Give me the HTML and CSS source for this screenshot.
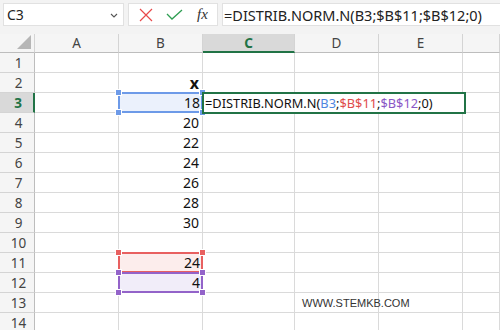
FILE: index.html
```html
<!DOCTYPE html>
<html lang="en">
<head>
    <meta charset="UTF-8">
    <title>DISTRIB.NORM.N</title>
    <link rel="stylesheet" href="styles.css">
</head>
<body>
    <div class="toolbar">
        <div class="namebox">
            <span>C3</span>
            <svg class="chev" width="8" height="5" viewBox="0 0 8 5"><path d="M1 1 L4 4 L7 1" fill="none" stroke="#555" stroke-width="1.1"/></svg>
        </div>
        <div class="fbuttons">
            <svg width="14" height="14" viewBox="0 0 14 14"><path d="M1 1 L13 13 M13 1 L1 13" stroke="#e8494b" stroke-width="1.2" fill="none"/></svg>
            <svg width="17" height="11" viewBox="0 0 17 11"><path d="M1 5 L6 10 L16 1" stroke="#2e9e52" stroke-width="1.3" fill="none"/></svg>
            <span class="fx">fx</span>
        </div>
        <div class="formula">=DISTRIB.NORM.N(B3;$B$11;$B$12;0)</div>
    </div>

    <div class="sheet">
        <div class="corner"><span class="tri"></span></div>
        <div class="colhead">A</div>
        <div class="colhead">B</div>
        <div class="colhead active">C</div>
        <div class="colhead">D</div>
        <div class="colhead">E</div>
        <div class="colhead"></div>

        <div class="rowhead">1</div><div class="cell"></div><div class="cell"></div><div class="cell"></div><div class="cell"></div><div class="cell"></div><div class="cell"></div>
        <div class="rowhead">2</div><div class="cell"></div><div class="cell num bold">x</div><div class="cell"></div><div class="cell"></div><div class="cell"></div><div class="cell"></div>
        <div class="rowhead active">3</div><div class="cell"></div>
        <div class="cell num ref blue">18<i class="h tl"></i><i class="h tr"></i><i class="h bl"></i><i class="h br"></i></div>
        <div class="cell edit-host">
            <div class="editor">=DISTRIB.NORM.N(<span class="c-blue">B3</span>;<span class="c-red">$B$11</span>;<span class="c-purple">$B$12</span>;0)</div>
        </div>
        <div class="cell"></div><div class="cell"></div><div class="cell"></div>
        <div class="rowhead">4</div><div class="cell"></div><div class="cell num">20</div><div class="cell"></div><div class="cell"></div><div class="cell"></div><div class="cell"></div>
        <div class="rowhead">5</div><div class="cell"></div><div class="cell num">22</div><div class="cell"></div><div class="cell"></div><div class="cell"></div><div class="cell"></div>
        <div class="rowhead">6</div><div class="cell"></div><div class="cell num">24</div><div class="cell"></div><div class="cell"></div><div class="cell"></div><div class="cell"></div>
        <div class="rowhead">7</div><div class="cell"></div><div class="cell num">26</div><div class="cell"></div><div class="cell"></div><div class="cell"></div><div class="cell"></div>
        <div class="rowhead">8</div><div class="cell"></div><div class="cell num">28</div><div class="cell"></div><div class="cell"></div><div class="cell"></div><div class="cell"></div>
        <div class="rowhead">9</div><div class="cell"></div><div class="cell num">30</div><div class="cell"></div><div class="cell"></div><div class="cell"></div><div class="cell"></div>
        <div class="rowhead">10</div><div class="cell"></div><div class="cell"></div><div class="cell"></div><div class="cell"></div><div class="cell"></div><div class="cell"></div>
        <div class="rowhead">11</div><div class="cell"></div>
        <div class="cell num ref red">24<i class="h tl"></i><i class="h tr"></i><i class="h bl"></i><i class="h br"></i></div>
        <div class="cell"></div><div class="cell"></div><div class="cell"></div><div class="cell"></div>
        <div class="rowhead">12</div><div class="cell"></div>
        <div class="cell num ref purple">4<i class="h tl"></i><i class="h tr"></i><i class="h bl"></i><i class="h br"></i></div>
        <div class="cell"></div><div class="cell"></div><div class="cell"></div><div class="cell"></div>
        <div class="rowhead">13</div><div class="cell"></div><div class="cell"></div><div class="cell"></div><div class="cell mark">WWW.STEMKB.COM</div><div class="cell"></div><div class="cell"></div>
        <div class="rowhead">14</div><div class="cell"></div><div class="cell"></div><div class="cell"></div><div class="cell"></div><div class="cell"></div><div class="cell"></div>
    </div>
</body>
</html>
```

FILE: styles.css
```css
body {
    margin: 0;
    font-family: "Noto Sans", "Open Sans", sans-serif;
    background-color: #ffffff;
    width: 500px;
    height: 330px;
    overflow: hidden;
}

/* formula bar */

.toolbar {
    display: flex;
    align-items: center;
    gap: 4px;
    height: 34px;
    padding: 0 0 0 3px;
    box-sizing: border-box;
    background-color: #f3f3f3;
}

.namebox,
.fbuttons,
.formula {
    height: 23px;
    box-sizing: border-box;
    background-color: #fff;
    border: 1px solid #e1e1e1;
    display: flex;
    align-items: center;
}

.namebox {
    width: 121px;
    padding: 0 5px 0 3px;
    justify-content: space-between;
    font-size: 14px;
    color: #222;
    margin-top: -5px;
}

.chev {
    margin-top: 1px;
}

.fbuttons {
    width: 90px;
    padding: 0 0 0 10px;
    gap: 13px;
    margin-top: -5px;
}

.fx {
    font-family: "Liberation Serif", serif;
    font-style: italic;
    font-size: 15px;
    color: #333;
    margin-left: 1px;
}

.formula {
    flex: 1;
    padding-left: 1px;
    font-size: 14.5px;
    color: #222;
    margin-top: -5px;
    border-right: none;
    white-space: nowrap;
}

/* grid */

.sheet {
    display: grid;
    grid-template-columns: 35px 84px 84px 92px 84px 84px 1fr;
    grid-template-rows: 19px repeat(14, 20px);
    font-size: 14px;
}

.corner,
.colhead,
.rowhead {
    background-color: #f5f5f5;
    color: #444;
    box-sizing: border-box;
    border-right: 1px solid #d4d4d4;
    border-bottom: 1px solid #d4d4d4;
    display: flex;
    align-items: center;
    justify-content: center;
    font-size: 13.5px;
}

.corner,
.colhead {
    border-bottom-color: #bdbdbd;
}

.rowhead {
    border-right-color: #bdbdbd;
    padding-left: 3px;
}

.corner {
    position: relative;
}

.tri {
    position: absolute;
    right: 3px;
    bottom: 3px;
    width: 0;
    height: 0;
    border-left: 14px solid transparent;
    border-bottom: 14px solid #b6b6b6;
}

.colhead.active,
.rowhead.active {
    background-color: #d9d9d9;
    color: #217346;
    font-weight: bold;
}

.colhead.active {
    border-bottom: 2px solid #217346;
}

.rowhead.active {
    border-right: 2px solid #217346;
}

.cell {
    box-sizing: border-box;
    border-right: 1px solid #dadada;
    border-bottom: 1px solid #dadada;
    color: #111;
    padding: 0 3px;
    display: flex;
    align-items: center;
    white-space: nowrap;
    position: relative;
}

.num {
    justify-content: flex-end;
}

.bold {
    font-weight: bold;
    font-size: 16px;
}

/* referenced ranges */

.ref {
    border: 2px solid;
    margin: -1px 0 0 -1px;
    padding-right: 1px;
}

.ref.blue {
    border-color: #6d9ae8;
    background-color: #ebf1fc;
}

.ref.red {
    border-color: #e86060;
    background-color: #fcedec;
}

.ref.purple {
    border-color: #9363c9;
    background-color: #f1edf9;
}

.h {
    position: absolute;
    width: 5px;
    height: 5px;
    border: 1px solid #fff;
    z-index: 2;
}

.ref.blue .h { background-color: #6d9ae8; }
.ref.red .h { background-color: #e86060; }
.ref.purple .h { background-color: #9363c9; }

.h.tl { left: -5px; top: -5px; }
.h.tr { right: -5px; top: -5px; }
.h.bl { left: -5px; bottom: -5px; }
.h.br { right: -5px; bottom: -5px; }

.ref.purple .h.tl,
.ref.purple .h.tr {
    z-index: 3;
}

/* in-cell editor */

.edit-host {
    z-index: 4;
}

.editor {
    position: absolute;
    left: -1px;
    top: -1px;
    width: 264px;
    height: 22px;
    box-sizing: border-box;
    border: 2px solid #217346;
    background-color: #fff;
    padding-left: 1px;
    line-height: 18px;
    font-size: 12.8px;
    color: #111;
}

.c-blue { color: #4f86e0; }
.c-red { color: #e04c4c; }
.c-purple { color: #8b57c6; }

.mark {
    font-family: "Liberation Sans", Arial, sans-serif;
    font-size: 11px;
    color: #333;
    padding-left: 7px;
    overflow: visible;
}
```
